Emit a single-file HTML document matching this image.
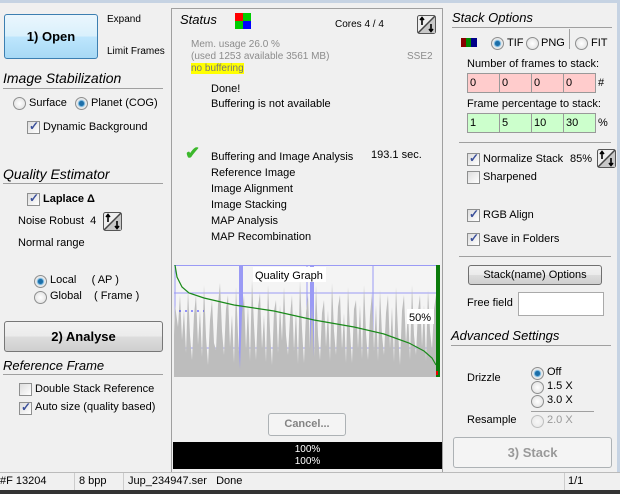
<!DOCTYPE html>
<html><head><style>
*{box-sizing:border-box}
body{margin:0;width:620px;height:494px;background:#f0f0f0;font-family:"Liberation Sans",sans-serif;font-size:11px;color:#000;position:relative;overflow:hidden}
.a{position:absolute;white-space:nowrap}
.h{position:absolute;font-style:italic;font-size:14px;border-bottom:1px solid #a0a0a0;color:#000}
.btn{position:absolute;border:1px solid #707070;border-radius:3px;background:linear-gradient(#f2f2f2,#ebebeb 50%,#dddddd 50%,#cfcfcf);text-align:center;font-weight:bold}
.cb{position:absolute;width:13px;height:13px;border:1px solid #8e8f8f;background:linear-gradient(135deg,#ddd,#fff)}
.cb.on::after{content:"✓";position:absolute;left:1px;top:-3px;font-size:12px;color:#3a4f9a;font-weight:bold}
.rd{position:absolute;width:13px;height:13px;border-radius:50%;border:1px solid #8e8f8f;background:radial-gradient(#fff,#dcdcdc)}
.rd.on::after{content:"";position:absolute;left:3px;top:3px;width:5px;height:5px;border-radius:50%;background:#1c6ea8;box-shadow:0 0 1px 1px #5aa7d8}
.ud{position:absolute;width:19px;height:19px}
.cell{position:absolute;height:20px;border:1px solid #999;padding:3px 2px;font-size:11px}
</style></head><body>
<svg width="0" height="0" style="position:absolute"><defs><symbol id="ud" viewBox="0 0 19 19"><rect x="0.5" y="0.5" width="18" height="18" rx="2" fill="#eee" stroke="#555"/><path d="M1 18 L18 1 L18 18 Z" fill="#c8c8c8"/><line x1="1" y1="18" x2="18" y2="1" stroke="#444" stroke-width="1.5"/><path d="M5 10 V3 M3 5 L5 2.5 L7 5" stroke="#000" stroke-width="1.6" fill="none"/><path d="M14 9 V16 M12 14 L14 16.5 L16 14" stroke="#000" stroke-width="1.6" fill="none"/></symbol></defs></svg>
<div class="a" style="left:0;top:0;width:620px;height:3px;background:#c6d3e3"></div>
<!-- left panel -->
<div class="btn" style="left:4px;top:14px;width:94px;height:45px;border:1px solid #3c7fb1;border-radius:3px;background:linear-gradient(#eaf6fd,#d9f0fc 50%,#bee6fd 50%,#a7d9f5);font-size:13px;line-height:43px">1) Open</div>
<div class="a" style="left:107px;top:14px;font-size:10px">Expand</div>
<div class="a" style="left:107px;top:46px;font-size:10px">Limit Frames</div>
<div class="h" style="left:3px;top:70px;width:160px;height:19px">Image Stabilization</div>
<div class="rd" style="left:13px;top:97px"></div><div class="a" style="left:29px;top:97px">Surface</div>
<div class="rd on" style="left:75px;top:97px"></div><div class="a" style="left:91px;top:97px">Planet (COG)</div>
<div class="cb on" style="left:27px;top:121px"></div><div class="a" style="left:43px;top:121px">Dynamic Background</div>
<div class="h" style="left:3px;top:166px;width:160px;height:18px">Quality Estimator</div>
<div class="cb on" style="left:27px;top:193px"></div><div class="a" style="left:43px;top:193px;font-weight:bold">Laplace Δ</div>
<div class="a" style="left:18px;top:215px">Noise Robust&nbsp; 4</div>
<svg class="ud" style="left:103px;top:212px"><use href="#ud"/></svg>
<div class="a" style="left:18px;top:237px">Normal range</div>
<div class="rd on" style="left:34px;top:275px"></div><div class="a" style="left:50px;top:274px">Local&nbsp;&nbsp;&nbsp;&nbsp; ( AP )</div>
<div class="rd" style="left:34px;top:291px"></div><div class="a" style="left:50px;top:290px">Global&nbsp;&nbsp;&nbsp; ( Frame )</div>
<div class="btn" style="left:4px;top:321px;width:159px;height:31px;font-size:13px;line-height:29px;border-color:#777">2) Analyse</div>
<div class="h" style="left:3px;top:358px;width:160px;height:17px;font-size:13px">Reference Frame</div>
<div class="cb" style="left:19px;top:383px"></div><div class="a" style="left:35px;top:383px">Double Stack Reference</div>
<div class="cb on" style="left:19px;top:402px"></div><div class="a" style="left:35px;top:401px">Auto size (quality based)</div>
<!-- center panel -->
<div class="a" style="left:171px;top:8px;width:272px;height:464px;border:1px solid #a0a0a0;border-bottom:none"></div>
<div class="a" style="left:180px;top:12px;font-style:italic;font-size:13px">Status</div>
<div class="a" style="left:235px;top:13px;width:8px;height:8px;background:#f00"></div>
<div class="a" style="left:243px;top:13px;width:8px;height:8px;background:#0c0"></div>
<div class="a" style="left:235px;top:21px;width:8px;height:8px;background:#0c0"></div>
<div class="a" style="left:243px;top:21px;width:8px;height:8px;background:#00f"></div>
<div class="a" style="left:335px;top:19px;font-size:10px">Cores 4 / 4</div>
<svg class="ud" style="left:417px;top:15px"><use href="#ud"/></svg>
<div class="a" style="left:191px;top:39px;font-size:10px;color:#8c8c8c;line-height:12px">Mem. usage 26.0 %<br>(used 1253 available 3561 MB)</div>
<div class="a" style="left:407px;top:51px;font-size:10px;color:#8c8c8c">SSE2</div>
<div class="a" style="left:191px;top:63px;font-size:10px;color:#777;background:#ff0;line-height:11px">no buffering</div>
<div class="a" style="left:211px;top:83px">Done!</div>
<div class="a" style="left:211px;top:98px">Buffering is not available</div>
<div class="a" style="left:185px;top:143px;color:#3cb82c;font-size:18px;font-weight:bold">✔</div>
<div class="a" style="left:211px;top:149px;line-height:16px">Buffering and Image Analysis<br>Reference Image<br>Image Alignment<br>Image Stacking<br>MAP Analysis<br>MAP Recombination</div>
<div class="a" style="left:371px;top:149px">193.1 sec.</div>
<svg class="a" style="left:174px;top:265px" width="266" height="112" viewBox="0 0 266 112">
<rect width="266" height="112" fill="#f4f4f4"/>
<g stroke="#9a9af5" stroke-width="1" fill="none">
<line x1="1" y1="1" x2="1" y2="111"/><line x1="133" y1="0" x2="133" y2="112"/><line x1="199" y1="0" x2="199" y2="112"/>
<line x1="0" y1="0.5" x2="266" y2="0.5"/><line x1="0" y1="28" x2="266" y2="28"/><line x1="0" y1="83" x2="266" y2="83"/><line x1="0" y1="111" x2="266" y2="111"/>
</g>
<rect x="65" y="0" width="4" height="112" fill="#9a9af5"/><rect x="136" y="0" width="4" height="112" fill="#9a9af5"/>
<polygon fill="#bdbdbd" points="1,40 4,62 6,30 8,75 10,45 12,88 14,25 16,70 18,95 20,50 22,30 24,80 26,45 28,92 30,20 32,72 34,100 36,55 38,35 40,78 42,85 44,40 46,18 48,66 50,90 52,44 54,30 56,82 58,50 60,98 62,22 64,70 66,104 68,48 70,30 72,85 74,40 76,96 78,15 80,60 82,95 84,42 86,28 88,84 90,50 92,97 94,20 96,66 98,100 100,46 102,35 104,88 106,40 108,76 110,22 112,70 114,90 116,52 118,30 120,86 122,45 124,99 126,15 128,64 130,98 132,48 134,30 136,84 138,40 140,92 142,20 144,70 146,95 148,48 150,35 152,82 154,45 156,96 158,18 160,66 162,90 164,42 166,30 168,85 170,48 172,98 174,22 176,66 178,98 180,44 182,35 184,84 186,40 188,94 190,20 192,68 194,95 196,50 198,28 200,86 202,40 204,96 206,25 208,70 210,90 212,48 214,30 216,84 218,42 220,97 222,22 224,66 226,100 228,46 230,30 232,80 234,45 236,95 238,20 240,70 242,90 244,46 246,30 248,82 250,40 252,96 254,25 256,66 258,85 260,44 262,30 264,70 264,112 0,112 0,70"/>
<polyline fill="none" stroke="#1a8a1a" stroke-width="1.2" points="1,0 3,12 8,22 15,28 30,33 60,40 100,46 140,55 180,62 210,69 235,78 250,86 258,93 262,100"/>
<rect x="262" y="0" width="4" height="112" fill="#0a7a0a"/><rect x="262" y="106" width="2" height="4" fill="#e00"/>
<line x1="5" y1="46" x2="30" y2="46" stroke="#33f" stroke-dasharray="2,4"/>
<rect x="79" y="2" width="73" height="15" fill="#fff"/>
<text x="81" y="14" font-family="Liberation Sans" font-size="11">Quality Graph</text>
<rect x="233" y="44" width="27" height="15" fill="#fff"/>
<text x="235" y="56" font-family="Liberation Sans" font-size="11">50%</text>
</svg>
<div class="a" style="left:268px;top:413px;width:78px;height:23px;border:1px solid #adb2b5;border-radius:3px;background:#f4f4f4;color:#838383;font-weight:bold;text-align:center;line-height:21px">Cancel...</div>
<div class="a" style="left:173px;top:442px;width:269px;height:27px;background:#000;color:#fff;font-size:10px;text-align:center;line-height:12px;padding-top:2px">100%<br>100%</div>
<!-- right panel -->
<div class="h" style="left:452px;top:10px;width:160px;height:18px;font-size:13px">Stack Options</div>
<div class="a" style="left:461px;top:38px;width:5px;height:9px;background:#800"></div>
<div class="a" style="left:466px;top:38px;width:5px;height:9px;background:#080"></div>
<div class="a" style="left:471px;top:38px;width:6px;height:9px;background:#008"></div>
<div class="rd on" style="left:491px;top:37px"></div><div class="a" style="left:507px;top:37px">TIF</div>
<div class="rd" style="left:526px;top:37px"></div><div class="a" style="left:541px;top:37px">PNG</div>
<div class="a" style="left:569px;top:29px;width:1px;height:20px;background:#a0a0a0"></div>
<div class="rd" style="left:575px;top:37px"></div><div class="a" style="left:591px;top:37px">FIT</div>
<div class="a" style="left:467px;top:58px">Number of frames to stack:</div>
<div class="cell" style="left:467px;top:73px;width:33px;background:#ffcccc">0</div>
<div class="cell" style="left:499px;top:73px;width:33px;background:#ffcccc">0</div>
<div class="cell" style="left:531px;top:73px;width:33px;background:#ffcccc">0</div>
<div class="cell" style="left:563px;top:73px;width:33px;background:#ffcccc">0</div>
<div class="a" style="left:598px;top:77px">#</div>
<div class="a" style="left:467px;top:98px">Frame percentage to stack:</div>
<div class="cell" style="left:467px;top:113px;width:33px;background:#ccffcc">1</div>
<div class="cell" style="left:499px;top:113px;width:33px;background:#ccffcc">5</div>
<div class="cell" style="left:531px;top:113px;width:33px;background:#ccffcc">10</div>
<div class="cell" style="left:563px;top:113px;width:33px;background:#ccffcc">30</div>
<div class="a" style="left:598px;top:117px">%</div>
<div class="a" style="left:459px;top:142px;width:152px;height:1px;background:#a0a0a0"></div>
<div class="cb on" style="left:467px;top:153px"></div><div class="a" style="left:483px;top:153px">Normalize Stack</div>
<div class="a" style="left:570px;top:153px">85%</div>
<svg class="ud" style="left:597px;top:149px"><use href="#ud"/></svg>
<div class="cb" style="left:467px;top:171px"></div><div class="a" style="left:483px;top:171px">Sharpened</div>
<div class="cb on" style="left:467px;top:209px"></div><div class="a" style="left:483px;top:209px">RGB Align</div>
<div class="cb on" style="left:467px;top:233px"></div><div class="a" style="left:483px;top:233px">Save in Folders</div>
<div class="a" style="left:459px;top:256px;width:152px;height:1px;background:#a0a0a0"></div>
<div class="btn" style="left:468px;top:265px;width:134px;height:20px;font-weight:normal;line-height:18px">Stack(name) Options</div>
<div class="a" style="left:467px;top:297px">Free field</div>
<div class="a" style="left:518px;top:292px;width:86px;height:24px;background:#fff;border:1px solid #aaa"></div>
<div class="h" style="left:451px;top:328px;width:160px;height:18px;font-size:13px">Advanced Settings</div>
<div class="a" style="left:467px;top:372px">Drizzle</div>
<div class="rd on" style="left:531px;top:367px"></div><div class="a" style="left:547px;top:366px">Off</div>
<div class="rd" style="left:531px;top:381px"></div><div class="a" style="left:547px;top:380px">1.5 X</div>
<div class="rd" style="left:531px;top:395px"></div><div class="a" style="left:547px;top:394px">3.0 X</div>
<div class="a" style="left:531px;top:411px;width:63px;height:1px;background:#a0a0a0"></div>
<div class="a" style="left:467px;top:414px">Resample</div>
<div class="rd" style="left:531px;top:415px;opacity:.5"></div><div class="a" style="left:547px;top:414px;color:#999">2.0 X</div>
<div class="a" style="left:453px;top:437px;width:159px;height:31px;border:1px solid #adb2b5;border-radius:3px;background:#f4f4f4;color:#999;font-weight:bold;font-size:13px;text-align:center;line-height:29px">3) Stack</div>
<div class="a" style="left:617px;top:0;width:3px;height:472px;background:#c6d3e3"></div>
<!-- status bar -->
<div class="a" style="left:0;top:472px;width:620px;height:22px;background:#f0f0f0;border-top:1px solid #bbb"></div>
<div class="a" style="left:0;top:475px;font-size:11px">#F 13204</div>
<div class="a" style="left:74px;top:473px;width:1px;height:17px;background:#ccc"></div>
<div class="a" style="left:79px;top:475px">8 bpp</div>
<div class="a" style="left:123px;top:473px;width:1px;height:17px;background:#ccc"></div>
<div class="a" style="left:128px;top:475px">Jup_234947.ser&nbsp;&nbsp; Done</div>
<div class="a" style="left:564px;top:473px;width:1px;height:17px;background:#ccc"></div>
<div class="a" style="left:568px;top:475px">1/1</div>
<div class="a" style="left:0;top:490px;width:620px;height:4px;background:#333"></div>
</body></html>
